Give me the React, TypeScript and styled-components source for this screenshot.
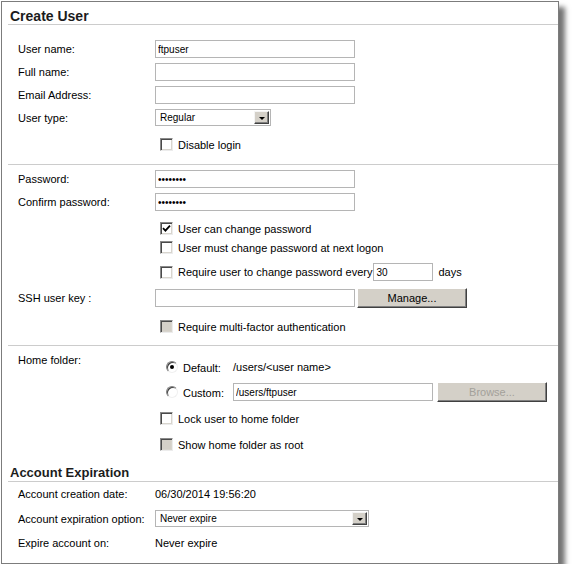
import styled, { createGlobalStyle } from "styled-components";

const GlobalStyle = createGlobalStyle`
  html, body {
    margin: 0;
    padding: 0;
    background: #ffffff;
  }
  body {
    font-family: "Liberation Sans", Arial, sans-serif;
    font-size: 11px;
    color: #000000;
  }
`;

function CheckBox({ checked, disabled }: { checked?: boolean; disabled?: boolean }) {
  return (
    <Box $disabled={disabled}>
      {checked && (
        <svg width="9" height="9" viewBox="0 0 9 9">
          <path d="M1 4.2 L3.4 6.6 L8 1.6" fill="none" stroke="#000" strokeWidth="1.8" />
        </svg>
      )}
    </Box>
  );
}

function Radio({ checked }: { checked?: boolean }) {
  return <RadioCircle>{checked && <RadioDot />}</RadioCircle>;
}

function Select({ width, value }: { width: number; value: string }) {
  return (
    <SelectBox $w={width}>
      <span>{value}</span>
      <DropButton>
        <Arrow />
      </DropButton>
    </SelectBox>
  );
}

function App() {
  return (
    <>
      <GlobalStyle />
      <Panel>
        <Heading $size={14} $mt={6}>Create User</Heading>

        <Section $divider $pb={13}>
          <Row $mt={15} $h={18}>
            <Label>User name:</Label>
            <TextInput $w={200} defaultValue="ftpuser" />
          </Row>
          <Row $mt={5} $h={18}>
            <Label>Full name:</Label>
            <TextInput $w={200} />
          </Row>
          <Row $mt={5} $h={18}>
            <Label>Email Address:</Label>
            <TextInput $w={200} />
          </Row>
          <Row $mt={5} $h={17}>
            <Label>User type:</Label>
            <Select width={116} value="Regular" />
          </Row>
          <CheckRow $mt={12}>
            <CheckBox />
            <CheckText>Disable login</CheckText>
          </CheckRow>
        </Section>

        <Section $divider $pb={12}>
          <Row $mt={5} $h={18}>
            <Label>Password:</Label>
            <TextInput $w={200} type="password" defaultValue="12345678" />
          </Row>
          <Row $mt={5} $h={18}>
            <Label>Confirm password:</Label>
            <TextInput $w={200} type="password" defaultValue="12345678" />
          </Row>
          <CheckRow $mt={11}>
            <CheckBox checked />
            <CheckText>User can change password</CheckText>
          </CheckRow>
          <CheckRow $mt={6}>
            <CheckBox />
            <CheckText>User must change password at next logon</CheckText>
          </CheckRow>
          <CheckRow $mt={9} $h={18}>
            <CheckBox />
            <CheckText>Require user to change password every</CheckText>
            <TextInput $w={60} $ml={1} defaultValue="30" />
            <Suffix>days</Suffix>
          </CheckRow>
          <Row $mt={7} $h={20}>
            <Label>SSH user key :</Label>
            <TextInput $w={200} />
            <Button $ml={2}>Manage...</Button>
          </Row>
          <CheckRow $mt={12}>
            <CheckBox disabled />
            <CheckText>Require multi-factor authentication</CheckText>
          </CheckRow>
        </Section>

        <HomeSection>
          <TopLabel>Home folder:</TopLabel>
          <Controls>
            <RadioRow $mt={13} $h={16}>
              <Radio checked />
              <RadioText>Default:</RadioText>
              <span>/users/&lt;user name&gt;</span>
            </RadioRow>
            <RadioRow $mt={7} $h={20}>
              <Radio />
              <RadioText>Custom:</RadioText>
              <TextInput $w={200} defaultValue="/users/ftpuser" />
              <Button $ml={4} disabled>Browse...</Button>
            </RadioRow>
            <FolderCheck $mt={10}>
              <CheckBox />
              <CheckText>Lock user to home folder</CheckText>
            </FolderCheck>
            <FolderCheck $mt={13}>
              <CheckBox disabled />
              <CheckText>Show home folder as root</CheckText>
            </FolderCheck>
          </Controls>
        </HomeSection>

        <Heading $size={13} $mt={14}>Account Expiration</Heading>

        <Section>
          <Row $mt={5} $h={14}>
            <Label>Account creation date:</Label>
            <span>06/30/2014 19:56:20</span>
          </Row>
          <Row $mt={9} $h={17}>
            <Label>Account expiration option:</Label>
            <Select width={214} value="Never expire" />
          </Row>
          <Row $mt={9} $h={14}>
            <Label>Expire account on:</Label>
            <span>Never expire</span>
          </Row>
        </Section>
      </Panel>
    </>
  );
}

export default App;

const Panel = styled.div`
  box-sizing: border-box;
  width: 558px;
  height: 563px;
  margin: 1px 0 0 1px;
  padding-left: 6px;
  border: 1px solid #7c7c7c;
  background: #ffffff;
  box-shadow: 6px 6px 5px rgba(0, 0, 0, 0.55);
`;

const Heading = styled.h2<{ $size: number; $mt: number }>`
  margin: ${(p) => p.$mt}px 0 0;
  padding: 0 0 0 2px;
  height: 16px;
  line-height: 16px;
  font-size: ${(p) => p.$size}px;
  font-weight: bold;
  color: #1c1c1c;
  border-bottom: 1px solid #cccccc;
`;

const Section = styled.div<{ $divider?: boolean; $pb?: number }>`
  padding: 0 0 ${(p) => p.$pb ?? 0}px 10px;
  border-bottom: ${(p) => (p.$divider ? "1px solid #cccccc" : "none")};
`;

const Row = styled.div<{ $mt: number; $h: number }>`
  display: flex;
  align-items: center;
  height: ${(p) => p.$h}px;
  margin-top: ${(p) => p.$mt}px;
`;

const CheckRow = styled.div<{ $mt: number; $h?: number }>`
  display: flex;
  align-items: center;
  height: ${(p) => p.$h ?? 13}px;
  margin: ${(p) => p.$mt}px 0 0 142px;
`;

const Label = styled.span`
  width: 137px;
  flex-shrink: 0;
  white-space: nowrap;
`;

const TextInput = styled.input<{ $w: number; $ml?: number }>`
  box-sizing: border-box;
  width: ${(p) => p.$w}px;
  height: 18px;
  margin: 0 0 0 ${(p) => p.$ml ?? 0}px;
  padding: 0 2px;
  border: 1px solid #b5b5b5;
  border-radius: 0;
  outline: none;
  background: #ffffff;
  font-family: "Liberation Sans", Arial, sans-serif;
  font-size: 10px;
  color: #000000;
`;

const Box = styled.span<{ $disabled?: boolean }>`
  box-sizing: border-box;
  display: flex;
  align-items: center;
  justify-content: center;
  width: 13px;
  height: 13px;
  flex-shrink: 0;
  border: 1px solid;
  border-color: #8a8a8a #ececec #ececec #8a8a8a;
  box-shadow: inset 1px 1px #4a4a4a, inset -1px -1px #d8d5ce;
  background: ${(p) => (p.$disabled ? "#d4d0c8" : "#ffffff")};
`;

const CheckText = styled.span`
  margin-left: 5px;
  white-space: nowrap;
`;

const Suffix = styled.span`
  margin-left: 5px;
`;

const SelectBox = styled.div<{ $w: number }>`
  box-sizing: border-box;
  display: flex;
  align-items: center;
  justify-content: space-between;
  width: ${(p) => p.$w}px;
  height: 17px;
  padding: 0 1px 0 4px;
  border: 1px solid #b5b5b5;
  background: #ffffff;
  font-size: 10px;
`;

const DropButton = styled.span`
  box-sizing: border-box;
  display: flex;
  align-items: center;
  justify-content: center;
  width: 15px;
  height: 13px;
  background: #d4d0c8;
  border: 1px solid;
  border-color: #f4f4f4 #404040 #404040 #f4f4f4;
  box-shadow: inset -1px -1px #808080;
`;

const Arrow = styled.span`
  width: 0;
  height: 0;
  margin-top: 1px;
  border-left: 3px solid transparent;
  border-right: 3px solid transparent;
  border-top: 3px solid #000000;
`;

const Button = styled.button<{ $ml: number }>`
  box-sizing: border-box;
  width: 110px;
  height: 20px;
  margin-left: ${(p) => p.$ml}px;
  padding: 0;
  background: #d4d0c8;
  border: 1px solid;
  border-color: #ffffff #404040 #404040 #ffffff;
  box-shadow: inset -1px -1px #808080;
  border-radius: 0;
  font-family: "Liberation Sans", Arial, sans-serif;
  font-size: 11px;
  color: #000000;

  &:disabled {
    color: #a3a09a;
  }
`;

const HomeSection = styled.div`
  display: flex;
  padding-left: 10px;
`;

const TopLabel = styled.span`
  width: 137px;
  flex-shrink: 0;
  padding-top: 7px;
  line-height: 14px;
`;

const Controls = styled.div`
  display: flex;
  flex-direction: column;
`;

const RadioRow = styled.div<{ $mt: number; $h: number }>`
  display: flex;
  align-items: center;
  height: ${(p) => p.$h}px;
  margin: ${(p) => p.$mt}px 0 0 11px;
`;

const RadioCircle = styled.span`
  box-sizing: border-box;
  display: flex;
  align-items: center;
  justify-content: center;
  width: 12px;
  height: 12px;
  flex-shrink: 0;
  border-radius: 50%;
  border: 1px solid;
  border-color: #808080 #f0f0f0 #f0f0f0 #808080;
  box-shadow: inset 1px 1px #404040;
  background: #ffffff;
`;

const RadioDot = styled.span`
  width: 4px;
  height: 4px;
  border-radius: 50%;
  background: #000000;
`;

const RadioText = styled.span`
  width: 50px;
  margin-left: 5px;
  padding-top: 2px;
`;

const FolderCheck = styled.div<{ $mt: number }>`
  display: flex;
  align-items: center;
  height: 13px;
  margin: ${(p) => p.$mt}px 0 0 5px;
`;
